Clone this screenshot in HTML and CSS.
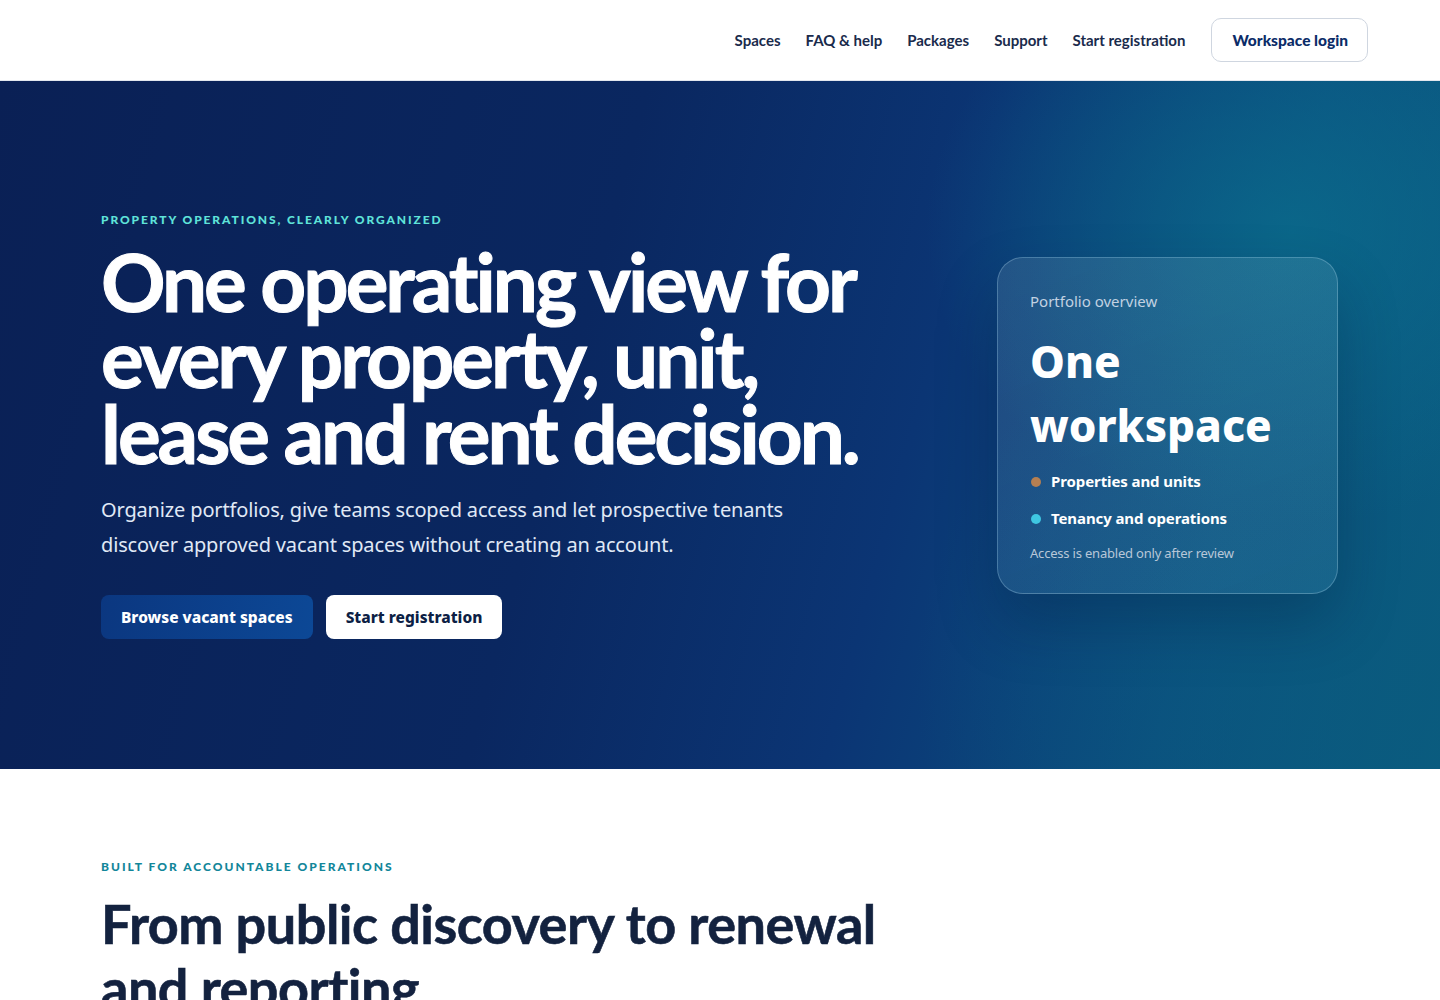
FILE: index.html
```html
<!DOCTYPE html>
<html lang="en">
<head>
<meta charset="utf-8">
<title>Property operations</title>
<link rel="stylesheet" href="styles.css">
</head>
<body>
<header class="topbar">
  <nav class="nav">
    <a class="nav-link" href="#">Spaces</a>
    <a class="nav-link" href="#">FAQ &amp; help</a>
    <a class="nav-link" href="#">Packages</a>
    <a class="nav-link" href="#">Support</a>
    <a class="nav-link" href="#">Start registration</a>
    <a class="nav-login" href="#">Workspace login</a>
  </nav>
</header>
<section class="hero">
  <div class="hero-inner">
    <div class="hero-copy">
      <p class="eyebrow">PROPERTY OPERATIONS, CLEARLY ORGANIZED</p>
      <h1 class="hero-title">One operating view for every property, unit, lease and rent decision.</h1>
      <p class="hero-lead">Organize portfolios, give teams scoped access and let prospective tenants discover approved vacant spaces without creating an account.</p>
      <div class="hero-actions">
        <a class="btn btn-primary" href="#">Browse vacant spaces</a>
        <a class="btn btn-light" href="#">Start registration</a>
      </div>
    </div>
    <aside class="card">
      <p class="card-label">Portfolio overview</p>
      <h2 class="card-title">One workspace</h2>
      <ul class="card-list">
        <li class="card-item"><span class="dot dot-amber"></span>Properties and units</li>
        <li class="card-item"><span class="dot dot-teal"></span>Tenancy and operations</li>
      </ul>
      <p class="card-note">Access is enabled only after review</p>
    </aside>
  </div>
</section>
<section class="features">
  <p class="eyebrow eyebrow-dark">BUILT FOR ACCOUNTABLE OPERATIONS</p>
  <h2 class="section-title">From public discovery to renewal and reporting</h2>
</section>
</body>
</html>
```
FILE: styles.css
```css
* { box-sizing: border-box; }
html, body { margin: 0; padding: 0; }
body {
  font-family: "Lato", "Noto Sans", sans-serif;
  color: #12223f;
  background: #fff;
}
a { text-decoration: none; }

.topbar {
  height: 81px;
  border-bottom: 1px solid #e3e7ee;
  display: flex;
  align-items: center;
  justify-content: flex-end;
  padding: 0 72px 0 0;
}
.nav {
  display: flex;
  align-items: center;
  gap: 25px;
}
.nav-link {
  font-size: 15px;
  font-weight: 700;
  color: #1a2b4c;
}
.nav-login {
  height: 44px;
  padding: 0 19px 0 20px;
  margin-left: 1px;
  display: flex;
  align-items: center;
  border: 1px solid #cfd6e0;
  border-radius: 10px;
  font-size: 15.5px;
  font-weight: 900;
  color: #0b2c68;
}

.hero {
  height: 688px;
  background:
    radial-gradient(ellipse 520px 420px at 1290px 150px, rgba(10, 110, 140, 0.75), rgba(10, 110, 140, 0) 70%),
    radial-gradient(ellipse 700px 600px at 1440px 600px, rgba(10, 90, 125, 0.8), rgba(10, 90, 125, 0) 75%),
    linear-gradient(105deg, #0a2055 0%, #0a2760 40%, #0b3574 62%, #0b4f80 82%, #0a5e82 100%);
  color: #fff;
}
.hero-inner {
  display: flex;
  justify-content: space-between;
  align-items: flex-start;
  padding: 132px 102px 0 101px;
}
.hero-copy { width: 820px; }
.eyebrow {
  margin: 0;
  font-size: 12px;
  font-weight: 900;
  letter-spacing: 1.9px;
  color: #5fe3d9;
  line-height: 14px;
}
.hero-title {
  margin: 16px 0 0;
  font-size: 80px;
  line-height: 76px;
  font-weight: 700;
  letter-spacing: -3px;
  width: 820px;
  -webkit-text-stroke: 1px #fff;
}
.hero-lead {
  margin: 21px 0 0;
  font-family: "Noto Sans", "Lato", sans-serif;
  font-size: 20px;
  line-height: 35px;
  color: #e0e9f6;
  width: 720px;
  letter-spacing: -0.15px;
}
.hero-actions {
  display: flex;
  gap: 13px;
  margin-top: 33px;
}
.btn {
  height: 44px;
  display: flex;
  align-items: center;
  padding: 0 20px;
  border-radius: 8px;
  font-family: "Noto Sans", "Lato", sans-serif;
  font-size: 15.5px;
  font-weight: 800;
}
.btn-primary {
  background: linear-gradient(100deg, #0b3780 0%, #0c4896 100%);
  color: #fff;
}
.btn-light {
  background: #fff;
  color: #0d1f45;
}

.card {
  margin-top: 44px;
  width: 341px;
  height: 337px;
  padding: 32px 32px 0;
  border-radius: 26px;
  border: 1px solid rgba(180, 220, 240, 0.3);
  background: linear-gradient(160deg, rgba(255, 255, 255, 0.1), rgba(120, 190, 230, 0.12));
  box-shadow: 0 30px 60px rgba(2, 20, 50, 0.25);
  font-family: "Noto Sans", "Lato", sans-serif;
}
.card-label {
  margin: 0;
  font-size: 15px;
  line-height: 22px;
  color: #c2d2e2;
}
.card-title {
  margin: 17px 0 0;
  font-size: 44px;
  line-height: 64px;
  font-weight: 800;
}
.card-list {
  list-style: none;
  margin: 13px 0 0;
  padding: 0;
  display: flex;
  flex-direction: column;
  gap: 14px;
}
.card-item {
  display: flex;
  align-items: center;
  gap: 10px;
  font-size: 15px;
  line-height: 23px;
  font-weight: 700;
  letter-spacing: -0.1px;
}
.dot {
  width: 10px;
  height: 10px;
  border-radius: 50%;
  margin-left: 1px;
}
.dot-amber { background: #b57f52; }
.dot-teal { background: #3fc7e2; }
.card-note {
  margin: 13px 0 0;
  font-size: 13px;
  line-height: 20px;
  color: #b8c7d8;
  letter-spacing: -0.2px;
}

.features {
  padding: 91px 101px 0;
}
.eyebrow-dark {
  color: #12869a;
  letter-spacing: 2px;
}
.section-title {
  margin: 18px 0 0;
  width: 820px;
  font-size: 54px;
  line-height: 64px;
  font-weight: 700;
  letter-spacing: -0.5px;
  color: #13223f;
  -webkit-text-stroke: 0.6px #13223f;
}
```
